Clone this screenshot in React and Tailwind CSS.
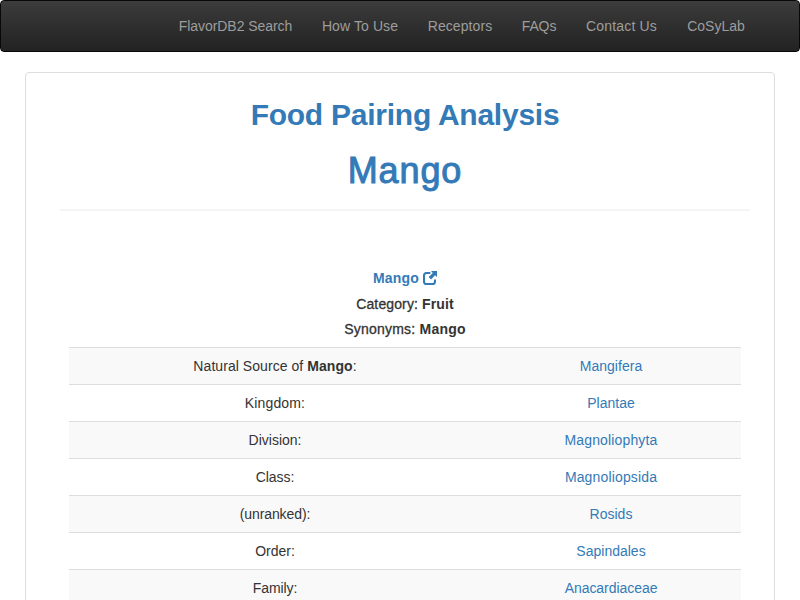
const NAV = [
  ["FlavorDB2 Search", "w-[113px] tracking-[-0.05px]"],
  ["How To Use", "w-[76px] tracking-[0.1px]"],
  ["Receptors", "w-[64px] tracking-[0.08px]"],
  ["FAQs", "w-[34px] tracking-[-0.1px]"],
  ["Contact Us", "w-[71px] tracking-[0.18px]"],
  ["CoSyLab", "w-[58px]"],
];

const ROWS = [
  [<>Natural Source of <b>Mango</b>:</>, "Mangifera", "tracking-[0.06px]", "tracking-[0.03px]"],
  ["Kingdom:", "Plantae", "tracking-[0.15px]", "tracking-normal"],
  ["Division:", "Magnoliophyta", "tracking-normal", "tracking-[0.15px]"],
  ["Class:", "Magnoliopsida", "tracking-[-0.05px]", "tracking-[0.15px]"],
  ["(unranked):", "Rosids", "tracking-[-0.1px]", "tracking-normal"],
  ["Order:", "Sapindales", "tracking-normal", "tracking-normal"],
  ["Family:", "Anacardiaceae", "tracking-[-0.1px]", "tracking-[-0.05px]"],
];

function NewWindowIcon() {
  return (
    <svg className="ml-1 size-[14px]" viewBox="0 0 14 14" fill="none">
      <path d="M7.4 1.9H3.6Q1 1.9 1 4.5V10.4Q1 13 3.6 13H9.4Q12 13 12 10.4V8.4" stroke="currentColor" strokeWidth="2" />
      <path d="M8 0H14V6L12.1 4.3L8 8.4L5.7 6.1L9.8 2Z" fill="currentColor" />
    </svg>
  );
}

export default function App() {
  return (
    <div className="h-[600px] w-[800px] overflow-hidden bg-white font-['Helvetica_Neue','Liberation_Sans',Arial,sans-serif] text-[14px] leading-[20px] text-[#333]">
      <nav className="flex h-[52px] justify-end gap-[30px] rounded-[4px] border border-[#080808] bg-linear-to-b from-[#3c3c3c] to-[#222] pt-[15px] pr-[54px] text-[#9d9d9d]">
        {NAV.map(([label, width]) => (
          <a key={label} className={`flex justify-center whitespace-nowrap ${width}`}>{label}</a>
        ))}
      </nav>
      <main className="mx-[25px] mt-5 h-[620px] rounded-[4px] border border-[#ddd] pr-6 pl-[34px] text-center">
        <h2 className="pt-[25px] text-[30px] leading-[33px] font-bold tracking-[-0.25px] text-[#337ab7]">Food Pairing Analysis</h2>
        <h1 className="mt-[20px] text-[36px] leading-[40px] tracking-[0.9px] text-[#337ab7] [-webkit-text-stroke:1px_#337ab7]">Mango</h1>
        <hr className="mt-[18px] border-t-2 border-[#f4f4f4]" />
        <div className="mt-[57px] flex h-5 items-center justify-center font-bold text-[#337ab7]">
          <span className="tracking-[0.15px]">Mango</span>
          <NewWindowIcon />
        </div>
        <p className="mt-[6px] tracking-[0.12px] [-webkit-text-stroke:0.3px_#333]">Category: <b className="[-webkit-text-stroke:0px]">Fruit</b></p>
        <p className="mt-[5px] tracking-[0.22px] [-webkit-text-stroke:0.3px_#333]">Synonyms: <b className="[-webkit-text-stroke:0px]">Mango</b></p>
        <div className="mx-[9px] mt-2">
          {ROWS.map(([label, value, labelTracking, valueTracking]) => (
            <div key={value} className="flex h-[37px] border-t border-[#ddd] pt-2 odd:bg-[#f9f9f9]">
              <div className={`w-[412px] ${labelTracking}`}>{label}</div>
              <a className={`flex-1 text-[#337ab7] ${valueTracking}`}>{value}</a>
            </div>
          ))}
        </div>
      </main>
    </div>
  );
}
